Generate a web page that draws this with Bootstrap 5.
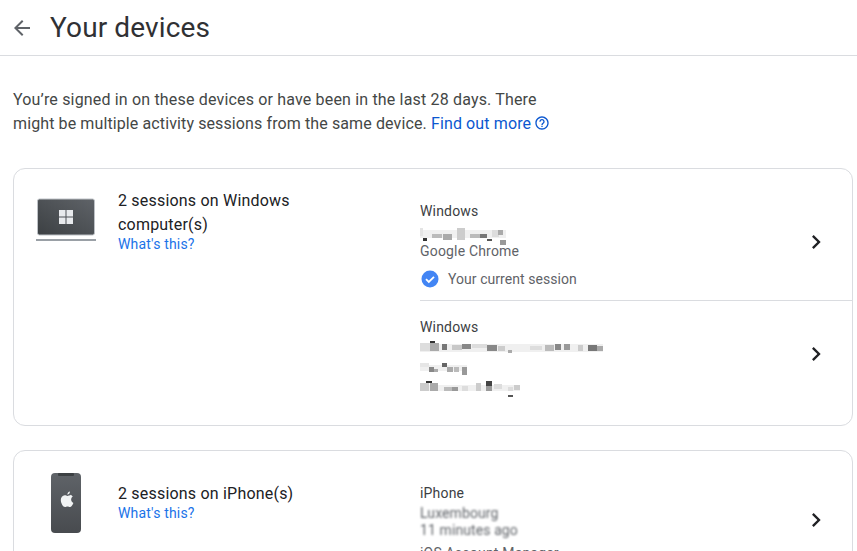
<!DOCTYPE html>
<html lang="en">
<head>
<meta charset="utf-8">
<title>Your devices</title>
<link href="https://cdn.jsdelivr.net/npm/bootstrap@5.3.0/dist/css/bootstrap.min.css" rel="stylesheet">
<style>
html,body{height:551px;overflow:hidden;background:#fff}
body{font-family:Roboto,"Liberation Sans",sans-serif;color:#444746;font-size:16px;line-height:24px}
.dev-head{height:56px;border-bottom:1px solid #dadce0;padding-left:10px}
.dev-head h1{font-size:28px;font-weight:400;line-height:36px;margin:0 0 0 16px;color:#303134;letter-spacing:.12px}
.dev-intro{margin:32px 0 32px 13px;width:545px;letter-spacing:.17px}
.dev-tight{letter-spacing:.11px}
.dev-intro a{color:#0b57d0;text-decoration:none;letter-spacing:.12px}
.dev-help{margin-left:3px;vertical-align:-2px}
.dev-what{color:#1a73e8;text-decoration:none;font-size:14px;line-height:16px;display:block;letter-spacing:.18px;margin-top:-1px}
.dev-box{margin:0 4px 24px 13px;border:1px solid #dadce0;border-radius:12px;padding:16px 0 17px}
.dev-left{width:406px;flex:none}
.dev-icon{width:104px;flex:none;padding-left:22px;padding-right:22px}
.dev-icon-pc{padding-top:13px}
.dev-icon-ph{padding-top:6px}
.dev-text-ph{padding-top:11px}
.dev-title{color:#202124;line-height:24px;padding-top:4px;letter-spacing:.2px}
.dev-row{font-size:14px;line-height:20px;padding:16px 22px 11px 0;margin:0;letter-spacing:.18px}
.dev-row + .dev-row{border-top:1px solid #dadce0}
.dev-row svg.dev-mos{display:block;overflow:visible}
.dev-chev{margin-bottom:7px}
.dev-name{color:#3c4043}
.dev-sub{color:#5f6368}
.dev-status{color:#5f6368;margin-top:8px;gap:8px;letter-spacing:.05px}
.dev-blur{filter:blur(.8px);color:#5f6368;letter-spacing:.1px}
.dev-blur + .dev-blur{margin-top:-3px;margin-bottom:3px}
</style>
</head>
<body>
<header class="dev-head d-flex align-items-center">
  <svg width="24" height="24" viewBox="0 0 24 24" fill="#5f6368"><path d="M20 11H7.83l5.59-5.59L12 4l-8 8 8 8 1.41-1.41L7.83 13H20v-2z"/></svg>
  <h1>Your devices</h1>
</header>
<p class="dev-intro">You’re signed in on these devices or have been in the last 28 days. There <span class="dev-tight">might be multiple activity sessions from the same device.</span> <a href="#">Find out more<svg class="dev-help" width="16" height="16" viewBox="0 0 24 24" fill="#0b57d0"><path d="M11 18h2v-2h-2v2zm1-16C6.48 2 2 6.48 2 12s4.48 10 10 10 10-4.48 10-10S17.52 2 12 2zm0 18c-4.41 0-8-3.59-8-8s3.59-8 8-8 8 3.59 8 8-3.59 8-8 8zm0-14c-2.21 0-4 1.79-4 4h2c0-1.1.9-2 2-2s2 .9 2 2c0 2-3 1.75-3 5h2c0-2.25 3-2.5 3-5 0-2.21-1.79-4-4-4z"/></svg></a></p>

<section class="dev-box d-flex">
  <div class="dev-left d-flex">
    <div class="dev-icon dev-icon-pc d-flex justify-content-center">
      <svg width="60" height="44" viewBox="0 0 60 44">
        <defs><linearGradient id="lap" x1="0" y1="1" x2="1" y2="0"><stop offset="0" stop-color="#3c4043"/><stop offset="1" stop-color="#5f6368"/></linearGradient></defs>
        <rect x="1.500" y="1" width="57" height="36" rx="2" fill="url(#lap)" stroke="#bdc1c6"/>
        <rect x="0" y="41" width="60" height="2" fill="#9aa0a6"/>
        <g fill="#e8eaed"><rect x="23" y="12" width="6.500" height="6.500"/><rect x="30.500" y="12" width="6.500" height="6.500"/><rect x="23" y="19.500" width="6.500" height="6.500"/><rect x="30.500" y="19.500" width="6.500" height="6.500"/></g>
      </svg>
    </div>
    <div>
      <div class="dev-title">2 sessions on Windows<br>computer(s)</div>
      <a class="dev-what" href="#">What's this?</a>
    </div>
  </div>
  <div class="flex-grow-1">
    <div class="dev-row d-flex align-items-center justify-content-between">
      <div>
        <div class="dev-name">Windows</div>
        <svg class="dev-mos" width="90" height="20" shape-rendering="crispEdges">
          <rect x="0" y="9" width="86" height="8" fill="#f0f0f0"/>
          <rect x="0" y="7" width="3" height="8" fill="#e4e4e4"/><rect x="3" y="17" width="4" height="3" fill="#333"/><rect x="12" y="13" width="10" height="4" fill="#bbb"/><rect x="23" y="13" width="9" height="6" fill="#aaa"/><rect x="37" y="7" width="8" height="12" fill="#ccc"/><rect x="50" y="13" width="10" height="4" fill="#bbb"/><rect x="60" y="13" width="7" height="4" fill="#777"/><rect x="67" y="18" width="5" height="2" fill="#555"/><rect x="72" y="9" width="7" height="7" fill="#ddd"/><rect x="78" y="9" width="5" height="5" fill="#aaa"/><rect x="80" y="19" width="6" height="5" fill="#999"/>
        </svg>
        <div class="dev-sub">Google Chrome</div>
        <div class="dev-status d-flex align-items-center">
          <svg width="20" height="20" viewBox="0 0 20 20"><circle cx="10" cy="10" r="8.500" fill="#4285f4"/><path d="M6 10.200l2.800 2.800L14 7.800" fill="none" stroke="#fff" stroke-width="1.800"/></svg>
          <span>Your current session</span>
        </div>
      </div>
      <svg class="dev-chev" width="28" height="28" viewBox="0 0 24 24" fill="#202124"><path d="M10 6L8.590 7.410 13.170 12l-4.580 4.590L10 18l6-6z"/></svg>
    </div>
    <div class="dev-row d-flex align-items-center justify-content-between">
      <div>
        <div class="dev-name">Windows</div>
        <svg class="dev-mos" width="190" height="60" shape-rendering="crispEdges">
          <rect x="0" y="7" width="183" height="8" fill="#f0f0f0"/><rect x="0" y="28" width="47" height="6" fill="#f0f0f0"/><rect x="0" y="48" width="100" height="6" fill="#f0f0f0"/>
          <g transform="translate(0 2)" fill="#c8c8c8"><rect x="0" y="4" width="10" height="8" fill="#ddd"/><rect x="10" y="2" width="5" height="2" fill="#333"/><rect x="10" y="4" width="9" height="8" fill="#aaa"/><rect x="22" y="5" width="5" height="6" fill="#777"/><rect x="32" y="6" width="10" height="5"/><rect x="42" y="5" width="9" height="5" fill="#888"/><rect x="52" y="5" width="15" height="4" fill="#ddd"/><rect x="67" y="6" width="10" height="6" fill="#888"/><rect x="78" y="7" width="7" height="5" fill="#ccc"/><rect x="88" y="11" width="4" height="3" fill="#aaa"/><rect x="110" y="7" width="12" height="4" fill="#ddd"/><rect x="125" y="6" width="9" height="6" fill="#bbb"/><rect x="135" y="5" width="6" height="6" fill="#888"/><rect x="144" y="5" width="6" height="6" fill="#999"/><rect x="158" y="6" width="5" height="6" fill="#ccc"/><rect x="168" y="6" width="9" height="6" fill="#777"/><rect x="177" y="7" width="6" height="5" fill="#aaa"/></g>
          <g><rect x="0" y="26" width="9" height="4" fill="#e6e6e6"/><rect x="9" y="30" width="5" height="5" fill="#888"/><rect x="14" y="32" width="4" height="3" fill="#aaa"/><rect x="22" y="26" width="5" height="4" fill="#666"/><rect x="27" y="30" width="6" height="5" fill="#aaa"/><rect x="34" y="30" width="5" height="5" fill="#bbb"/><rect x="42" y="30" width="5" height="8" fill="#999"/></g>
          <g><rect x="0" y="46" width="9" height="8" fill="#ccc"/><rect x="6" y="44" width="6" height="2" fill="#333"/><rect x="10" y="46" width="8" height="8" fill="#aaa"/><rect x="24" y="50" width="8" height="4" fill="#bbb"/><rect x="32" y="50" width="6" height="4" fill="#999"/><rect x="42" y="49" width="6" height="5" fill="#ddd"/><rect x="56" y="46" width="5" height="8" fill="#ccc"/><rect x="66" y="44" width="6" height="5" fill="#444"/><rect x="66" y="49" width="6" height="5" fill="#999"/><rect x="74" y="47" width="8" height="5" fill="#ddd"/><rect x="88" y="50" width="5" height="4" fill="#ddd"/><rect x="88" y="58" width="5" height="2" fill="#555"/><rect x="94" y="48" width="6" height="5" fill="#ccc"/></g>
        </svg>
      </div>
      <svg class="dev-chev" width="28" height="28" viewBox="0 0 24 24" fill="#202124"><path d="M10 6L8.590 7.410 13.170 12l-4.580 4.590L10 18l6-6z"/></svg>
    </div>
  </div>
</section>

<section class="dev-box d-flex">
  <div class="dev-left d-flex">
    <div class="dev-icon dev-icon-ph d-flex justify-content-center">
      <svg width="30" height="60" viewBox="0 0 30 60">
        <defs><linearGradient id="ph" x1="0" y1="0" x2="0" y2="1"><stop offset="0" stop-color="#5f6368"/><stop offset="1" stop-color="#484b4f"/></linearGradient></defs>
        <rect x="0" y="0" width="30" height="60" rx="4" fill="url(#ph)"/>
        <rect x="7" y="0" width="16" height="3" rx="1" fill="#3c4043"/>
        <g transform="translate(2.500 4) scale(.86)"><path fill="#f1f3f4" d="M19.600 21.300c-1.200 0-2.200.7-3.300.7-1 0-2-.7-3.200-.7-2.700 0-4.600 2.500-4.600 5.500 0 3.600 2.600 8.200 4.900 8.200 1 0 1.800-.7 2.900-.7s1.800.7 2.900.7c1.500 0 3-2.300 3.900-4.800-1.700-.8-2.600-2.200-2.600-3.900 0-1.600.8-2.800 2-3.600-.9-1.300-2.200-2-2.900-2.200zM16.200 20.600c1.500-.1 3-1.700 2.900-3.600-1.600.2-3.100 1.800-2.900 3.600z"/></g>
      </svg>
    </div>
    <div class="dev-text-ph">
      <div class="dev-title">2 sessions on iPhone(s)</div>
      <a class="dev-what" href="#">What's this?</a>
    </div>
  </div>
  <div class="flex-grow-1">
    <div class="dev-row d-flex align-items-center justify-content-between">
      <div>
        <div class="dev-name">iPhone</div>
        <div class="dev-blur">Luxembourg</div>
        <div class="dev-blur">11 minutes ago</div>
        <div class="dev-sub">iOS Account Manager</div>
      </div>
      <svg class="dev-chev" width="28" height="28" viewBox="0 0 24 24" fill="#202124"><path d="M10 6L8.590 7.410 13.170 12l-4.580 4.590L10 18l6-6z"/></svg>
    </div>
  </div>
</section>
</body>
</html>
